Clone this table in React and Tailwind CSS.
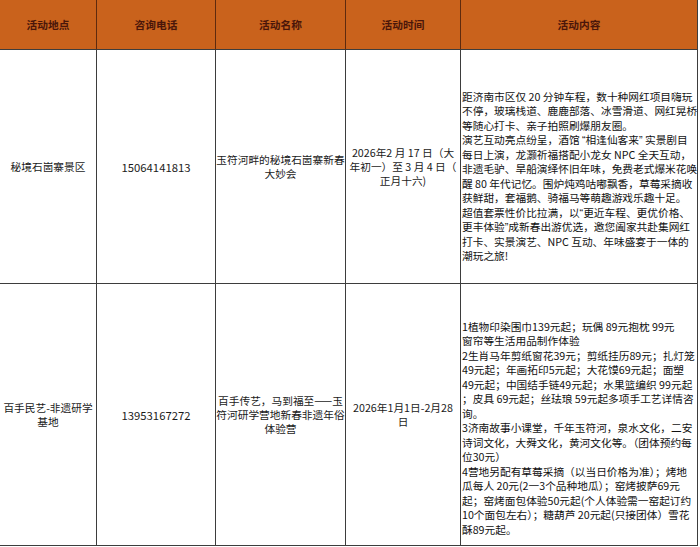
import React from 'react';

const headers = ['活动地点', '咨询电话', '活动名称', '活动时间', '活动内容'];

const rows = [
  {
    place: ['秘境石崮寨景区'],
    phone: '15064141813',
    name: ['玉符河畔的秘境石崮寨新春', '大妙会'],
    time: ['2026年2 月 17 日（大', '年初一）至 3 月 4 日（', '正月十六)'],
    shift: 'pt-[20px]',
    content: [
      '距济南市区仅 20 分钟车程，数十种网红项目嗨玩',
      '不停，玻璃栈道、鹿鹿部落、冰雪滑道、网红晃桥',
      '等随心打卡、亲子拍照刷爆朋友圈。',
      '演艺互动亮点纷呈，酒馆 “相逢仙客来” 实景剧目',
      '每日上演，龙灏祈福搭配小龙女 NPC 全天互动，',
      '非遗毛驴、旱船演绎怀旧年味，免费老式爆米花唤',
      '醒 80 年代记忆。围炉炖鸡咕嘟飘香，草莓采摘收',
      '获鲜甜，套福鹅、骑福马等萌趣游戏乐趣十足。',
      '超值套票性价比拉满，以“更近车程、更优价格、',
      '更丰体验”成新春出游优选，邀您阖家共赴集网红',
      '打卡、实景演艺、NPC 互动、年味盛宴于一体的',
      '潮玩之旅!',
    ],
  },
  {
    place: ['百手民艺-非遗研学', '基地'],
    phone: '13953167272',
    name: ['百手传艺，马到福至——玉', '符河研学营地新春非遗年俗', '体验营'],
    time: ['2026年1月1日-2月28', '日'],
    shift: 'pt-[28px]',
    content: [
      '1植物印染围巾139元起；玩偶 89元抱枕 99元',
      '窗帘等生活用品制作体验',
      '2生肖马年剪纸窗花39元；剪纸挂历89元；扎灯笼',
      '49元起；年画拓印5元起；大花馍69元起；面塑',
      '49元起；中国结手链49元起；水果篮编织 99元起',
      '；皮具 69元起；丝珐琅 59元起多项手工艺详情咨',
      '询。',
      '3济南故事小课堂，千年玉符河，泉水文化，二安',
      '诗词文化，大舜文化，黄河文化等。（团体预约每',
      '位30元）',
      '4营地另配有草莓采摘（以当日价格为准）；烤地',
      '瓜每人 20元(2一3个品种地瓜）；窑烤披萨69元',
      '起；窑烤面包体验50元起(个人体验需一窑起订约',
      '10个面包左右）；糖葫芦 20元起(只接团体）雪花',
      '酥89元起。',
    ],
  },
];

// curly quotes in a latin face so they stay narrow like the original
const withQuotes = (s) =>
  s.split(/([“”])/).map((part, i) =>
    part === '“' || part === '”' ? (
      <span key={i} className="font-['Liberation_Sans']">{part}</span>
    ) : (
      part
    )
  );

const Lines = ({ lines }) => (
  <div className="w-full">
    {lines.map((l, i) => (
      <div key={i} className="whitespace-nowrap">{withQuotes(l)}</div>
    ))}
  </div>
);

const cell = 'border-r border-b border-[#3d3d3d] flex items-center overflow-hidden';

export default function App() {
  return (
    <div
      className="w-[700px] h-[547px] bg-white text-[10.7px] leading-[14px] text-[#1a1a1a]"
      style={{ fontFamily: '"Noto Sans CJK SC", "Noto Sans", sans-serif' }}
    >
      <div className="grid grid-cols-[97px_119px_130px_115px_237px] grid-rows-[50px_234px_262px]">
        {headers.map((h, i) => (
          <div
            key={h}
            className={`flex items-center justify-center pt-[1px] bg-[#c9621c] border-b border-b-[#3d3d3d] border-r ${
              i === 4 ? 'border-r-[#3d3d3d]' : 'border-r-[#5e2a0e]'
            } font-bold text-[#4a160a]`}
          >
            {h}
          </div>
        ))}
        {rows.map((r) => (
          <React.Fragment key={r.phone}>
            <div className={`${cell} justify-center text-center`}>
              <Lines lines={r.place} />
            </div>
            <div className={`${cell} justify-center text-center text-[11.3px]`}>
              {r.phone}
            </div>
            <div className={`${cell} justify-center text-center`}>
              <Lines lines={r.name} />
            </div>
            <div className={`${cell} justify-center text-center`}>
              <Lines lines={r.time} />
            </div>
            <div className={`${cell} ${r.shift} justify-start text-left pl-[1px] leading-[14.5px] text-[#111]`}>
              <Lines lines={r.content} />
            </div>
          </React.Fragment>
        ))}
      </div>
    </div>
  );
}
